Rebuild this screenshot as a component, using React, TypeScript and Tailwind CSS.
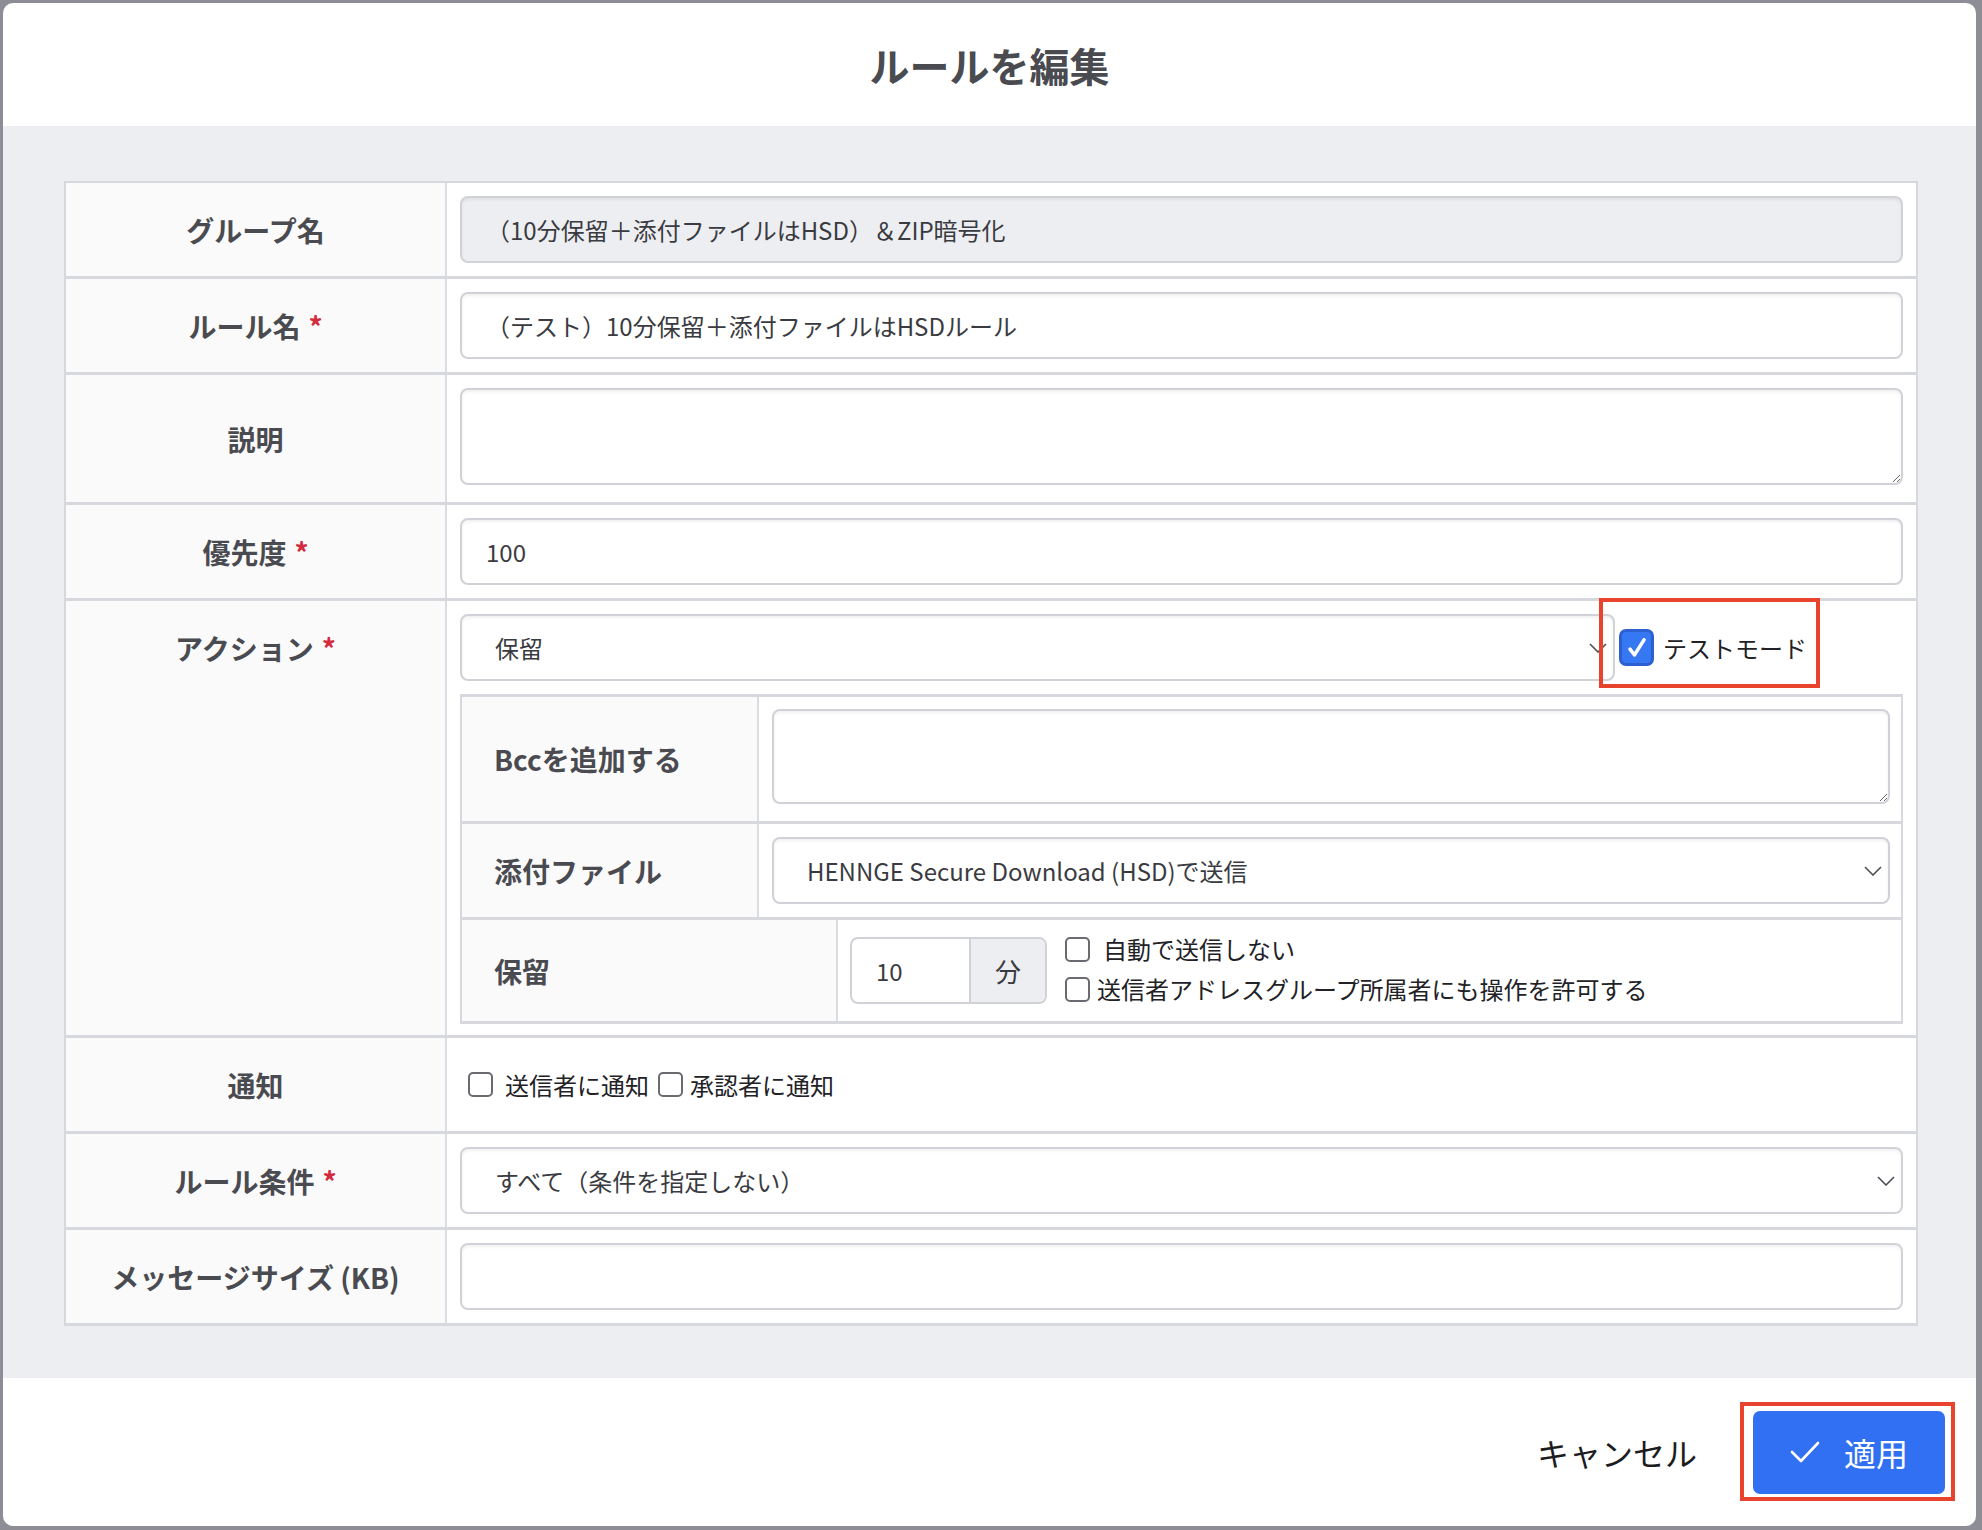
import type { ReactNode } from "react";

const labelCls = "text-[28px] font-bold text-[#4a4b51] leading-none whitespace-nowrap";
const fieldCls =
  "rounded-[8px] border-2 border-[#d0d2d7] shadow-[inset_0_2px_3px_rgba(0,0,0,0.06)] text-[24px] text-[#3a3b41]";

function Chevron() {
  return (
    <svg width="18" height="10" viewBox="0 0 18 10" fill="none">
      <polyline points="1,1 9,9 17,1" stroke="#4d4e54" strokeWidth="1.6" />
    </svg>
  );
}

function Req() {
  return <span className="ml-[8px] text-[#d22c3f]">*</span>;
}

function Check({ checked = false, className = "" }: { checked?: boolean; className?: string }) {
  if (checked) {
    return (
      <span
        className={`flex h-[37px] w-[35px] shrink-0 items-center justify-center rounded-[7px] border-[3px] border-[#2c5fcf] bg-[#3677f4] ${className}`}
      >
        <svg width="28" height="28" viewBox="0 0 24 24" fill="none">
          <path d="M6 13l3.8 5L18 5" stroke="#fff" strokeWidth="3" strokeLinecap="round" strokeLinejoin="round" />
        </svg>
      </span>
    );
  }
  return <span className={`block h-[25px] w-[25px] shrink-0 rounded-[5px] border-2 border-[#6a6b70] bg-white ${className}`} />;
}

function FakeSelect({ value, className = "" }: { value: string; className?: string }) {
  return (
    <div className={`flex h-[67px] items-center justify-between bg-white pl-[33px] pr-[6px] ${fieldCls} ${className}`}>
      <span>{value}</span>
      <Chevron />
    </div>
  );
}

function Row({
  label,
  required,
  alignTop,
  cellClass = "py-[13px]",
  children,
}: {
  label: string;
  required?: boolean;
  alignTop?: boolean;
  cellClass?: string;
  children: ReactNode;
}) {
  return (
    <div className="grid grid-cols-[381px_1fr] border-b-[3px] border-[#d6d8de]">
      <div
        className={`flex justify-center border-r-2 border-[#dcdde2] bg-[#fafafa] ${alignTop ? "items-start" : "items-center"}`}
      >
        <div className={`flex h-[93px] items-center ${labelCls}`}>
          {label}
          {required && <Req />}
        </div>
      </div>
      <div className={`relative bg-white px-[13px] ${cellClass}`}>{children}</div>
    </div>
  );
}

function SubRow({
  label,
  width,
  children,
  last,
}: {
  label: string;
  width: string;
  children: ReactNode;
  last?: boolean;
}) {
  return (
    <div className={`grid ${width} ${last ? "" : "border-b-[3px] border-[#d6d8de]"}`}>
      <div className={`flex items-center border-r-2 border-[#dcdde2] bg-[#fafafa] pl-[32px] ${labelCls}`}>{label}</div>
      <div className="bg-white">{children}</div>
    </div>
  );
}

export default function App() {
  return (
    <div className="h-[1530px] w-[1982px] bg-[#8d8e95] p-[3px] font-['Noto_Sans_CJK_JP',sans-serif]">
      <div className="flex h-[1523px] w-[1973px] flex-col overflow-hidden rounded-[10px] bg-white">
        {/* header */}
        <div className="flex h-[123px] shrink-0 items-center justify-center">
          <h1 className="text-[40px] font-bold text-[#4a4b51]">ルールを編集</h1>
        </div>

        {/* form body */}
        <div className="flex-1 bg-[#edeef2] pl-[61px] pr-[58px] pt-[55px]">
          <div className="border-x-2 border-t-2 border-[#d6d8de]">
            <Row label="グループ名">
              <input
                readOnly
                value="（10分保留＋添付ファイルはHSD）＆ZIP暗号化"
                className={`block h-[67px] w-full bg-[#edeef2] px-[24px] outline-none ${fieldCls}`}
              />
            </Row>
            <Row label="ルール名" required>
              <input
                readOnly
                value="（テスト）10分保留＋添付ファイルはHSDルール"
                className={`block h-[67px] w-full bg-white px-[24px] outline-none ${fieldCls}`}
              />
            </Row>
            <div className="grid grid-cols-[381px_1fr] border-b-[3px] border-[#d6d8de]">
              <div className={`flex items-center justify-center border-r-2 border-[#dcdde2] bg-[#fafafa] ${labelCls}`}>説明</div>
              <div className="bg-white px-[13px] pb-[17px] pt-[13px]">
                <textarea readOnly className={`block h-[97px] w-full bg-white outline-none ${fieldCls}`} />
              </div>
            </div>
            <Row label="優先度" required>
              <input
                readOnly
                value="100"
                className={`block h-[67px] w-full bg-white px-[24px] outline-none ${fieldCls}`}
              />
            </Row>

            <Row label="アクション" required alignTop cellClass="pt-[13px] pb-[11px]">
              <div className="flex items-center">
                <FakeSelect value="保留" className="w-[1155px]" />
                <Check checked className="ml-[4px]" />
                <span className="ml-[9px] text-[24px] text-[#222226]">テストモード</span>
              </div>
              <div className="pointer-events-none absolute left-[1152px] top-[-3px] h-[90px] w-[221px] border-4 border-[#e8432c]" />

              <div className="mt-[13px] border-x-2 border-y-[3px] border-[#d6d8de]">
                <SubRow label="Bccを追加する" width="grid-cols-[297px_1fr]">
                  <div className="pb-[17px] pl-[13px] pr-[11px] pt-[12px]">
                    <textarea readOnly className={`block h-[95px] w-full bg-white outline-none ${fieldCls}`} />
                  </div>
                </SubRow>
                <SubRow label="添付ファイル" width="grid-cols-[297px_1fr]">
                  <div className="py-[13px] pl-[13px] pr-[11px]">
                    <FakeSelect value="HENNGE Secure Download (HSD)で送信" />
                  </div>
                </SubRow>
                <SubRow label="保留" width="grid-cols-[376px_1fr]" last>
                  <div className="flex h-[101px] items-center pl-[12px]">
                    <div className={`flex h-[67px] w-[197px] overflow-hidden bg-white !shadow-none ${fieldCls}`}>
                      <div className="flex w-[117px] items-center pl-[24px]">10</div>
                      <div className="flex flex-1 items-center justify-center border-l-2 border-[#d0d2d7] bg-[#edeef2] text-[26px]">
                        分
                      </div>
                    </div>
                    <div className="ml-[18px] -mt-[3px] flex flex-col gap-[15px] text-[24px] text-[#222226]">
                      <label className="flex h-[25px] items-center">
                        <Check />
                        <span className="ml-[13px]">自動で送信しない</span>
                      </label>
                      <label className="flex h-[25px] items-center">
                        <Check />
                        <span className="ml-[7px]">送信者アドレスグループ所属者にも操作を許可する</span>
                      </label>
                    </div>
                  </div>
                </SubRow>
              </div>
            </Row>

            <Row label="通知">
              <div className="flex h-[67px] items-center pl-[8px] text-[24px] text-[#222226]">
                <Check />
                <span className="ml-[12px]">送信者に通知</span>
                <Check className="ml-[9px]" />
                <span className="ml-[7px]">承認者に通知</span>
              </div>
            </Row>
            <Row label="ルール条件" required>
              <FakeSelect value="すべて（条件を指定しない）" />
            </Row>
            <Row label="メッセージサイズ (KB)">
              <input readOnly className={`block h-[67px] w-full bg-white px-[24px] outline-none ${fieldCls}`} />
            </Row>
          </div>
        </div>

        {/* footer */}
        <div className="flex h-[148px] shrink-0 items-center justify-end gap-[56px] pr-[31px]">
          <button className="text-[32px] text-[#1c1c1f]">キャンセル</button>
          <div className="relative">
            <div className="pointer-events-none absolute bottom-[-7px] left-[-13px] right-[-10px] top-[-9px] border-4 border-[#e8432c]" />
            <button className="flex h-[83px] w-[192px] items-center justify-center gap-[24px] rounded-[7px] bg-[#3170f2] text-[32px] text-white">
              <svg width="30" height="24" viewBox="0 0 30 24" fill="none">
                <path d="M2 12l9 9L28 3" stroke="#fff" strokeWidth="2.6" strokeLinecap="round" strokeLinejoin="round" />
              </svg>
              <span>適用</span>
            </button>
          </div>
        </div>
      </div>
    </div>
  );
}
